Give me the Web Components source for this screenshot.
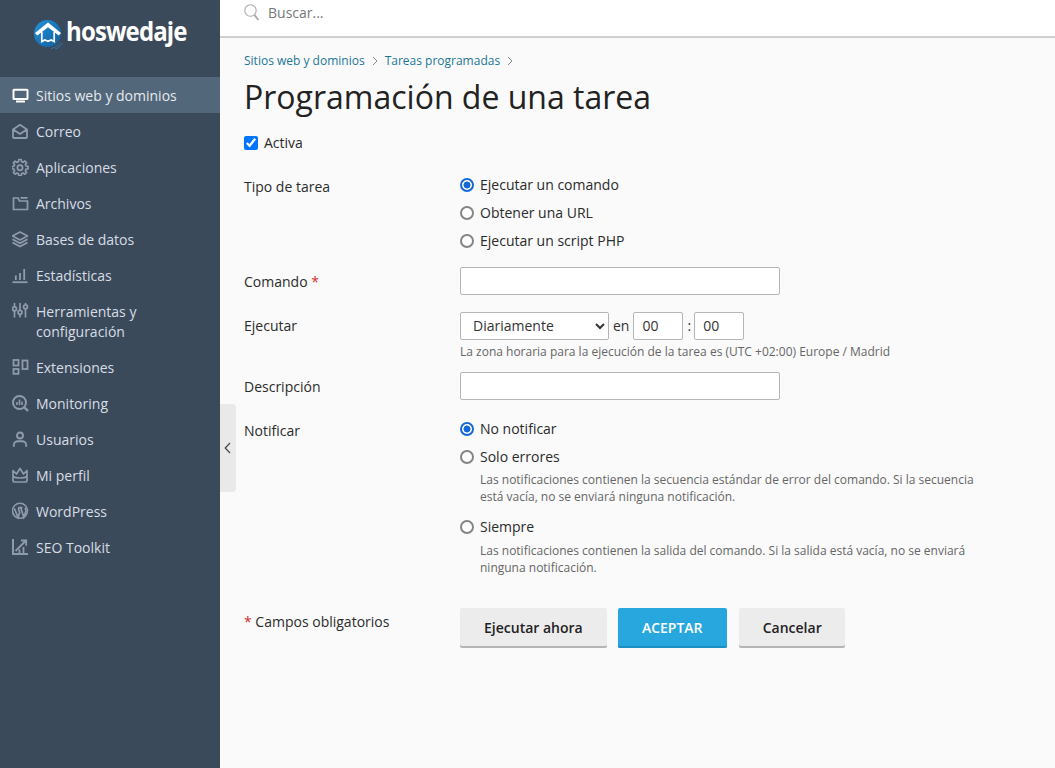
<!DOCTYPE html>
<html lang="es"><head><meta charset="utf-8"><title>Programación de una tarea</title>
<style>
html,body{margin:0;height:100%}
body{font:14px/20px "Open Sans",sans-serif;color:#2b2b2b;background:#fafafa;overflow:hidden}
</style></head><body>
<app-shell>
  <side-nav slot="nav">
    <nav-item active label="Sitios web y dominios" icon="monitor"></nav-item>
    <nav-item label="Correo" icon="mail"></nav-item>
    <nav-item label="Aplicaciones" icon="gear"></nav-item>
    <nav-item label="Archivos" icon="folder"></nav-item>
    <nav-item label="Bases de datos" icon="layers"></nav-item>
    <nav-item label="Estadísticas" icon="chart"></nav-item>
    <nav-item label="Herramientas y configuración" icon="sliders"></nav-item>
    <nav-item label="Extensiones" icon="ext"></nav-item>
    <nav-item label="Monitoring" icon="monitoring"></nav-item>
    <nav-item label="Usuarios" icon="user"></nav-item>
    <nav-item label="Mi perfil" icon="crown"></nav-item>
    <nav-item label="WordPress" icon="wp"></nav-item>
    <nav-item label="SEO Toolkit" icon="seo"></nav-item>
  </side-nav>
  <search-bar slot="top"></search-bar>
  <task-page slot="main">
    <form-row label="Tipo de tarea" kind="radios">
      <radio-opt name="t" checked>Ejecutar un comando</radio-opt>
      <radio-opt name="t">Obtener una URL</radio-opt>
      <radio-opt name="t">Ejecutar un script PHP</radio-opt>
    </form-row>
    <form-row label="Comando" required kind="field" style="margin-bottom:17px;--pt:5px"><text-field></text-field></form-row>
    <form-row label="Ejecutar" kind="schedule" style="margin-bottom:12px"><schedule-field></schedule-field></form-row>
    <form-row label="Descripción" kind="field" style="margin-bottom:15px;--pt:5px"><text-field></text-field></form-row>
    <form-row label="Notificar" kind="radios">
      <radio-opt name="n" checked>No notificar</radio-opt>
      <radio-opt name="n" style="--hint-top:4px;--hint-bottom:4px" hint="Las notificaciones contienen la secuencia estándar de error del comando. Si la secuencia está vacía, no se enviará ninguna notificación.">Solo errores</radio-opt>
      <radio-opt name="n" style="--hint-top:5px;--hint-bottom:4px" hint="Las notificaciones contienen la salida del comando. Si la salida está vacía, no se enviará ninguna notificación.">Siempre</radio-opt>
    </form-row>
    <form-actions></form-actions>
  </task-page>
</app-shell>
<script>
const ICONS={
monitor:'<path d="M3 3.800h13a.5.5 0 0 1 .5.5v8.200a.5.5 0 0 1-.5.5H3a.5.5 0 0 1-.5-.5V4.300a.5.5 0 0 1 .5-.5z" fill="none" stroke="#fff" stroke-width="2"/><rect x="5" y="14.500" width="9" height="2" fill="#fff"/>',
mail:'<path d="M2 7.500 9 2.800l7 4.700V15a1 1 0 0 1-1 1H3a1 1 0 0 1-1-1z M2.200 7.500 9 12l6.800-4.500" fill="none" stroke="currentColor" stroke-width="1.800" stroke-linejoin="round"/>',
gear:'<path d="M7.800 1.500h2.400l.4 2.100 1.500.6 1.800-1.200 1.700 1.700-1.200 1.800.6 1.500 2.100.4v2.400l-2.100.4-.6 1.500 1.200 1.800-1.700 1.700-1.800-1.200-1.500.6-.4 2.100H7.800l-.4-2.100-1.500-.6-1.800 1.200-1.700-1.700 1.200-1.800-.6-1.500-2.100-.4V8.600l2.100-.4.6-1.500-1.200-1.800 1.700-1.700 1.800 1.200 1.500-.6z" fill="none" stroke="currentColor" stroke-width="1.700" stroke-linejoin="round"/><circle cx="9" cy="9.800" r="2.600" fill="none" stroke="currentColor" stroke-width="1.700"/>',
folder:'<path d="M2.500 4v11.500h14V7H8.500L7 4z M9.500 3.800h7" fill="none" stroke="currentColor" stroke-width="1.700"/>',
layers:'<path d="M9 2 16.500 6 9 10 1.500 6z" fill="none" stroke="currentColor" stroke-width="1.600" stroke-linejoin="round"/><path d="M1.500 9.200 9 13.200l7.500-4M1.500 12.500 9 16.500l7.500-4" fill="none" stroke="currentColor" stroke-width="1.800"/>',
chart:'<path d="M1.500 16.200h15" stroke="currentColor" stroke-width="1.800"/><path d="M4.800 14V9.500M9 14V7M13.200 14V3" stroke="currentColor" stroke-width="1.800"/>',
sliders:'<g fill="none" stroke="currentColor" stroke-width="1.700"><path d="M3.500 1V4.500M3.500 9V15.500M9 1V8M9 12.500V15.500M14.500 1V2.500M14.500 7V15.500"/><circle cx="3.500" cy="6.800" r="2"/><circle cx="9" cy="10.300" r="2"/><circle cx="14.500" cy="4.800" r="2"/></g>',
ext:'<g fill="none" stroke="currentColor" stroke-width="1.800"><rect x="2.500" y="2" width="5" height="5.500"/><rect x="2.500" y="11" width="5" height="4.800"/><rect x="11.500" y="2.500" width="5" height="8.500"/></g>',
monitoring:'<circle cx="8.500" cy="8.500" r="6.500" fill="none" stroke="currentColor" stroke-width="2"/><path d="M13 13l4 4" stroke="currentColor" stroke-width="2.400"/><path d="M6 11V8M8.500 11V5.500M11 11V7.500" stroke="currentColor" stroke-width="1.600"/>',
user:'<circle cx="9" cy="5.500" r="3" fill="none" stroke="currentColor" stroke-width="1.900"/><path d="M2.800 16.800v-2c0-2 2-3.500 4-3.500h4.400c2 0 4 1.500 4 3.500v2" fill="none" stroke="currentColor" stroke-width="1.900"/>',
crown:'<path d="M2 4.500 5.500 8 9 2.500 12.500 8 16 4.500V14a2 2 0 0 1-2 2H4a2 2 0 0 1-2-2z M2 10.500c3 2 11 2 14 0" fill="none" stroke="currentColor" stroke-width="1.700" stroke-linejoin="round"/>',
wp:'<circle cx="9" cy="8.800" r="7.500" fill="none" stroke="currentColor" stroke-width="1.500"/><path d="M3.300 6.300 7 15.300l1.700-4.800-1.500-4.200M7 5.600h4.500M9.800 6.100l3 9 1.800-5c.5-1.500.2-3-.6-4.300" fill="none" stroke="currentColor" stroke-width="1.700"/>',
seo:'<path d="M2 1V16H17" fill="none" stroke="currentColor" stroke-width="2"/><path d="M4.500 13 14.500 3M10 2.500h5.200v5.200M8.500 15.500v-4M12.500 15.500v-6.500" fill="none" stroke="currentColor" stroke-width="1.800"/>'
};
function def(name,css,html,init){
  customElements.define(name,class extends HTMLElement{
    constructor(){super();this.attachShadow({mode:'open'});}
    connectedCallback(){
      const h=typeof html==='function'?html(this):html;
      this.shadowRoot.innerHTML='<style>'+css+'</style>'+h;
      if(init)init(this);
    }
  });
}
def('app-shell',`
:host{display:grid;grid-template-columns:220px 1fr;height:100vh;width:100%}
.nav{display:block;background:#3b4a5b;min-height:0;position:relative}
.right{display:flex;flex-direction:column;min-width:0;position:relative}
.toggle{position:absolute;left:0;top:404px;width:16px;height:88px;background:#e9e9e9;border-radius:0 4px 4px 0;display:flex;align-items:center;justify-content:center;padding-right:2px;box-sizing:border-box}
`,`<div class="nav"><slot name="nav"></slot></div>
<div class="right"><slot name="top"></slot><slot name="main"></slot>
<div class="toggle"><svg width="7" height="12" viewBox="0 0 7 12"><path d="M6 1 1.200 6 6 11" fill="none" stroke="#444" stroke-width="1.200"/></svg></div></div>`);
def('side-nav',`
:host{display:block;color:#d5dbe2}
.logo{height:77px;box-sizing:border-box;padding:15px 0 0 33px;display:flex;align-items:flex-start;gap:2px}
.logo span{font:700 27px/32px "Open Sans",sans-serif;color:#fff;letter-spacing:-1px;transform:scaleX(.89);transform-origin:0 0;display:block}
svg{flex:none;margin-top:5px}
`,`<div class="logo"><svg width="31" height="30" viewBox="0 0 31 30">
<defs><linearGradient id="g" x1="0" y1="0" x2="1" y2="1"><stop offset="0" stop-color="#2392d8"/><stop offset="1" stop-color="#0f5f9f"/></linearGradient></defs>
<circle cx="14.500" cy="13.500" r="13.500" fill="url(#g)"/>
<path d="M15 2.500 28 13l-2.300 2.600L15 7.300 4.300 15.600 2 13z" fill="#fff"/>
<path d="M8.800 12v9.500l3-1.600 3.200 1.400 3.200-1.400 3 1.600V12" fill="none" stroke="#fff" stroke-width="1.700"/>
<path d="M18 28.500c4-.6 7-2.600 9.500-6M22 29c3-.8 5.500-2.800 7.500-6" fill="none" stroke="#2b7fb8" stroke-width=".8"/>
</svg><span>hoswedaje</span></div><slot></slot>`);
def('nav-item',`
:host{display:block;box-sizing:border-box;padding:9px 12px 7px;font-size:14px;line-height:20px;color:#d7dde4}
:host([active]){background:#52677a;color:#e6eaee}
.r{display:flex;gap:6px}
svg{flex:none;width:18px;height:18px;color:#8f9bab}
`,el=>`<div class="r"><svg viewBox="1 0 18 18">${ICONS[el.getAttribute('icon')]}</svg><span>${el.getAttribute('label')}</span></div>`);
def('search-bar',`
:host{display:flex;align-items:center;height:38px;box-sizing:border-box;background:#fff;border-bottom:2px solid #cfcfcf;padding:0 0 10px 24px;gap:8px;color:#777}
svg{flex:none}
`,`<svg width="16" height="18" viewBox="0 0 16 18"><circle cx="6.500" cy="6.500" r="5.700" fill="none" stroke="#aaa" stroke-width="1.100"/><path d="M10.500 11l4 5" stroke="#aaa" stroke-width="2"/></svg><span>Buscar...</span>`);
def('task-page',`
:host{display:block;padding:13px 24px 0}
nav{display:flex;align-items:center;font-size:12px;line-height:20px;color:#1b7796}
nav svg{margin:0 7px}
h1{margin:4px 0 0;font:400 32px/44px "Open Sans",sans-serif;color:#222}
.act{display:flex;align-items:center;height:20px;margin:14px 0 18px}
input{margin:0 6px 0 0;width:14px;height:14px}
`,`<nav>Sitios web y dominios<svg width="6" height="10" viewBox="0 0 6 10"><path d="M1 1l4 4-4 4" fill="none" stroke="#888"/></svg>Tareas programadas<svg width="6" height="10" viewBox="0 0 6 10"><path d="M1 1l4 4-4 4" fill="none" stroke="#888"/></svg></nav>
<h1>Programación de una tarea</h1>
<div class="act"><input type="checkbox" checked><span>Activa</span></div>
<slot></slot>`);
def('form-row',`
:host{display:grid;grid-template-columns:216px 1fr;margin-bottom:16px}
.l{line-height:20px;padding-top:var(--pt,4px)}
i{font-style:normal;color:#d02d2d}
:host([kind=radios]){margin-bottom:12px;--pt:6px}
`,el=>`<div class="l">${el.getAttribute('label')}${el.hasAttribute('required')?' <i>*</i>':''}</div><div><slot></slot></div>`);
def('radio-opt',`
:host{display:block;padding:4px 0;line-height:20px;width:514px}
label{display:flex;align-items:center}
input{appearance:none;-webkit-appearance:none;box-sizing:border-box;margin:0 6px 0 0;width:14px;height:14px;border:2px solid #858585;border-radius:50%;background:#fff;flex:none}
input:checked{border-color:#1468d8;background:radial-gradient(circle,#1468d8 0 3.200px,#fff 3.800px)}
p{margin:var(--hint-top,3px) 0 var(--hint-bottom,5px) 20px;font-size:12px;line-height:17px;color:#666}
`,el=>`<label><input type="radio" name="${el.getAttribute('name')}" ${el.hasAttribute('checked')?'checked':''}><slot></slot></label>${el.hasAttribute('hint')?`<p>${el.getAttribute('hint')}</p>`:''}`);
def('text-field',`
:host{display:block;width:320px;height:28px}
input{display:block;width:100%;height:100%;box-sizing:border-box;border:1px solid #b5b5b5;border-radius:2px;background:#fff;padding:0 12px;font:inherit;outline:0}
`,`<input type="text">`);
def('schedule-field',`
:host{display:block;color:#333}
.r{display:flex;align-items:center;height:28px}
.r span{margin-left:4px}
select{width:149px;height:28px;box-sizing:border-box;border:1px solid #b5b5b5;border-radius:2px;background-color:#fff;font:inherit;color:#333;padding:0 8px 2px}
input{width:50px;height:28px;box-sizing:border-box;border:1px solid #b5b5b5;border-radius:2px;background:#fff;font:inherit;color:#333;padding:0 8px 2px;outline:0;margin-left:4px}
.c{margin-left:3px}
.c+input{margin-left:3px}
p{margin:3px 0 0;font-size:12px;line-height:17px;color:#666}
`,`<div class="r"><select><option>Diariamente</option></select><span>en</span><input value="00"><span class="c">:</span><input value="00"></div>
<p>La zona horaria para la ejecución de la tarea es (UTC +02:00) Europe / Madrid</p>`);
def('ui-button',`
:host{display:block}
button{display:block;height:40px;box-sizing:border-box;padding:0 24px;border:0;border-radius:2px;background:#ececec;color:#222;font:600 14px/20px "Open Sans",sans-serif;box-shadow:inset 0 -2px 0 #b5b5b5}
:host([primary]) button{background:#28a7de;color:#fff;box-shadow:inset 0 -2px 0 #1c8fc2;min-width:109px}
:host([tight]) button{padding-right:23px}
`,el=>`<button type="button"><slot></slot></button>`);
def('form-actions',`
:host{display:grid;grid-template-columns:216px 1fr;margin-top:24px}
.l{padding-top:4px}
i{font-style:normal;color:#d02d2d}
.b{display:flex;gap:11px}
.b ui-button:last-child{margin-left:1px}
`,`<div class="l"><i>*</i> Campos obligatorios</div><div class="b"><ui-button>Ejecutar ahora</ui-button><ui-button primary>ACEPTAR</ui-button><ui-button tight>Cancelar</ui-button></div>`);
</script>
</body></html>
